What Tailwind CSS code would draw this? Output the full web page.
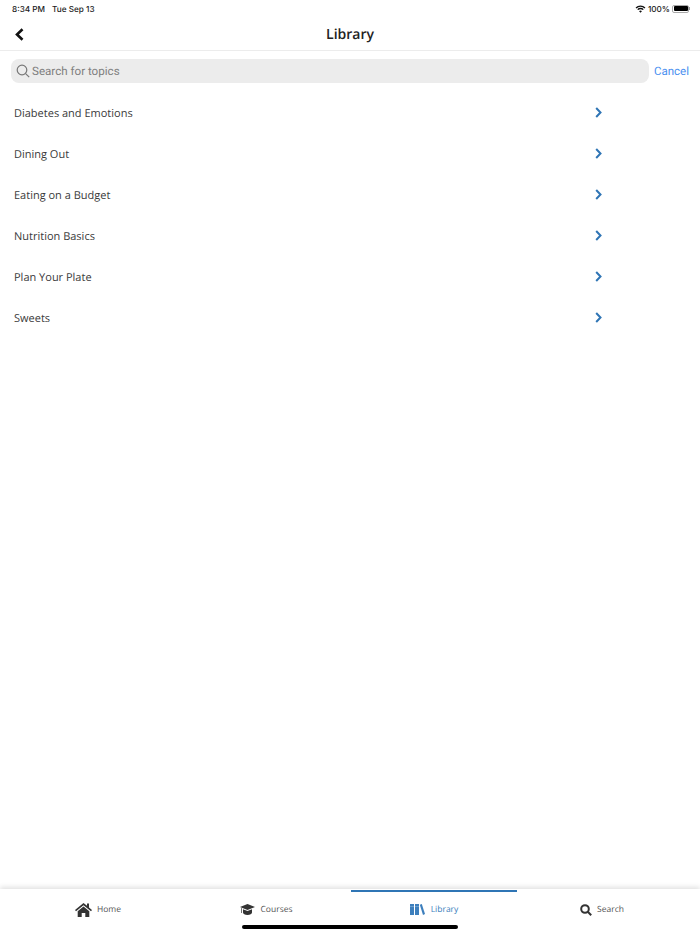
<!DOCTYPE html>
<html lang="en">
<head>
<meta charset="UTF-8">
<title>Library</title>
<script src="https://cdn.jsdelivr.net/npm/@tailwindcss/browser@4"></script>
</head>
<body class="bg-white font-['Open_Sans',sans-serif] text-[#333] [text-rendering:geometricPrecision]">
<div class="w-[700px] h-[934px] flex flex-col overflow-hidden relative">
  <!-- status bar -->
  <div class="h-[17px] pt-[1px] flex items-center justify-between pl-[12px] pr-[10px] font-['Inter',sans-serif] text-[8.2px] font-medium text-[#222] shrink-0">
    <div class="flex gap-[7px]"><span>8:34 PM</span><span>Tue Sep 13</span></div>
    <div class="flex items-center gap-[2px]">
      <svg width="11" height="8" viewBox="0 0 12 9" fill="none" stroke="#111" stroke-width="1.6"><path d="M1 3.4a7 7 0 0 1 10 0"/><path d="M2.9 5.2a4.3 4.3 0 0 1 6.2 0"/><path d="M6 8.8 4.4 6.9a2.2 2.2 0 0 1 3.2 0z" fill="#111" stroke="none"/></svg>
      <span>100%</span>
      <div class="w-[17px] h-[8px] border border-[#aaa] rounded-[2px] p-[0.5px]"><div class="w-full h-full bg-black rounded-[1px]"></div></div>
      <div class="w-[1px] h-[3px] -ml-[2px] bg-[#999]"></div>
    </div>
  </div>
  <!-- nav -->
  <div class="h-[34px] flex items-center justify-center relative border-b border-[#ececec] shrink-0">
    <svg class="absolute left-[15px] top-[11px]" width="9" height="13" viewBox="0 0 9 13" fill="none" stroke="#111" stroke-width="2.6"><path d="M7.5 1.2 2 6.5l5.5 5.3"/></svg>
    <span class="text-[14px] font-semibold text-[#222] pt-[2px]">Library</span>
  </div>
  <!-- search -->
  <div class="flex items-center justify-between pl-[11px] pr-[11px] pt-[8px] shrink-0">
    <div class="w-[638px] shrink-0 h-[24px] rounded-[8px] bg-[#ececec] flex items-center pl-[5px] gap-[2px]">
      <svg width="14" height="14" viewBox="0 0 14 14" fill="none" stroke="#777" stroke-width="1.2"><circle cx="6" cy="6" r="4.8"/><path d="m9.6 9.6 3.6 3.6"/></svg>
      <span class="font-['Roboto',sans-serif] text-[11.6px] text-[#808080] pt-[1px]">Search for topics</span>
    </div>
    <span class="font-['Roboto',sans-serif] text-[11.5px] text-[#4a90f0] pt-[1px]">Cancel</span>
  </div>
  <!-- topics -->
  <div class="flex flex-col pt-[9px] pl-[14px] w-[602px] text-[11px] text-[#3a3a3a]">
    <div class="h-[41px] flex items-center justify-between"><span class="pt-[4px]">Diabetes and Emotions</span><svg width="7" height="11" viewBox="0 0 7 11" fill="none" stroke="#2f75b5" stroke-width="2"><path d="M1.2 1 5.5 5.5 1.2 10"/></svg></div>
    <div class="h-[41px] flex items-center justify-between"><span class="pt-[4px]">Dining Out</span><svg width="7" height="11" viewBox="0 0 7 11" fill="none" stroke="#2f75b5" stroke-width="2"><path d="M1.2 1 5.5 5.5 1.2 10"/></svg></div>
    <div class="h-[41px] flex items-center justify-between"><span class="pt-[4px]">Eating on a Budget</span><svg width="7" height="11" viewBox="0 0 7 11" fill="none" stroke="#2f75b5" stroke-width="2"><path d="M1.2 1 5.5 5.5 1.2 10"/></svg></div>
    <div class="h-[41px] flex items-center justify-between"><span class="pt-[4px]">Nutrition Basics</span><svg width="7" height="11" viewBox="0 0 7 11" fill="none" stroke="#2f75b5" stroke-width="2"><path d="M1.2 1 5.5 5.5 1.2 10"/></svg></div>
    <div class="h-[41px] flex items-center justify-between"><span class="pt-[4px]">Plan Your Plate</span><svg width="7" height="11" viewBox="0 0 7 11" fill="none" stroke="#2f75b5" stroke-width="2"><path d="M1.2 1 5.5 5.5 1.2 10"/></svg></div>
    <div class="h-[41px] flex items-center justify-between"><span class="pt-[4px]">Sweets</span><svg width="7" height="11" viewBox="0 0 7 11" fill="none" stroke="#2f75b5" stroke-width="2"><path d="M1.2 1 5.5 5.5 1.2 10"/></svg></div>
  </div>
  <!-- tab bar -->
  <div class="mt-auto h-[45px] pl-[14px] grid grid-cols-[168px_169px_166px_170px] shadow-[0_-2px_5px_rgba(0,0,0,0.12)] text-[8.5px] text-[#555] shrink-0 relative">
    <div class="flex items-center justify-center gap-[5px] pb-[4px]">
      <svg width="17" height="14" viewBox="0 0 17 14" fill="#333"><path d="M8.5 0 0 7l1 1.3L8.5 2.2 16 8.3 17 7l-3-2.5V.6h-2v2.2z"/><path d="M8.5 3.6 2.7 8.3V14h4v-4h3.6v4h4V8.3z"/></svg>
      <span class="pt-[2px]">Home</span>
    </div>
    <div class="flex items-center justify-center gap-[5px] pb-[4px]">
      <svg width="15" height="11" viewBox="0 0 15 11" fill="#333"><path d="M7.5 0 0 3l7.5 3L15 3z"/><path d="M3 5.3V8.5c0 1.4 2 2.5 4.5 2.5S12 9.9 12 8.5V5.3L7.5 7.1z"/><path d="M1 4v5h.7V4.3z"/></svg>
      <span class="pt-[2px]">Courses</span>
    </div>
    <div class="flex items-center justify-center gap-[6px] pb-[4px] relative text-[#3d7fbd]">
      <div class="absolute left-0 right-0 top-[1px] h-[2px] bg-[#2f75b5]"></div>
      <svg width="15" height="11" viewBox="0 0 15 11" fill="#3d7fbd"><path d="M0 0h4v11H0zM5 0h4v11H5z"/><path d="M9.8.8 11.8 0 15 10l-2 1z"/><path d="M0 2h4v.6H0zM5 2h4v.6H5z" fill="#9cc0e0"/></svg>
      <span class="pt-[2px]">Library</span>
    </div>
    <div class="flex items-center justify-center gap-[5px] pb-[4px]">
      <svg width="12" height="12" viewBox="0 0 12 12" fill="none" stroke="#333" stroke-width="2"><circle cx="5" cy="5" r="3.8"/><path d="m7.8 7.8 3.4 3.4"/></svg>
      <span class="pt-[2px]">Search</span>
    </div>
    <div class="absolute left-[242px] bottom-[5px] w-[216px] h-[4px] rounded-full bg-black"></div>
  </div>
</div>
</body>
</html>
